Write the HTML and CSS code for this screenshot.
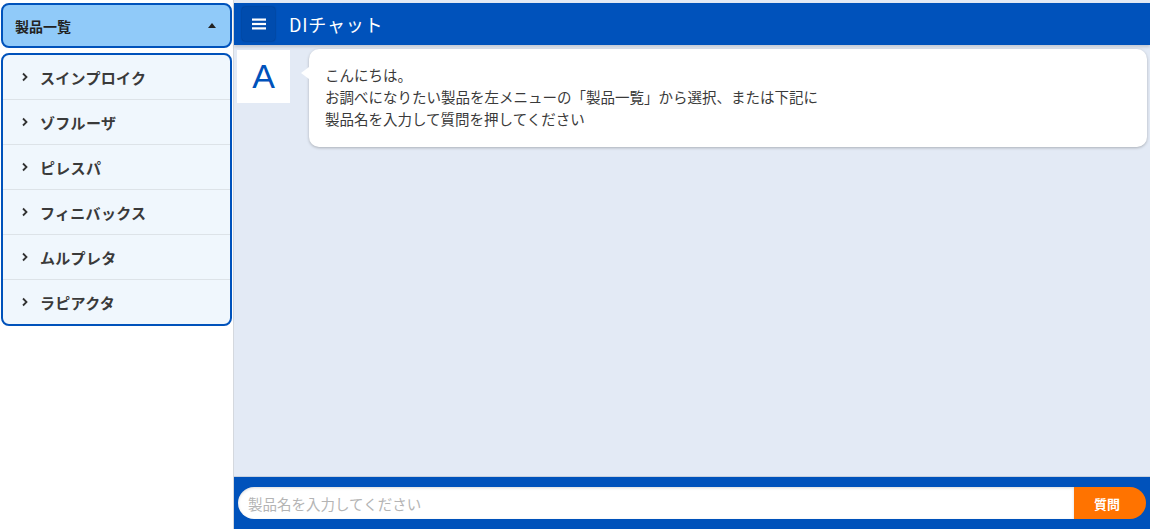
FILE: index.html
```html
<!DOCTYPE html>
<html lang="ja">
<head>
    <meta charset="UTF-8">
    <meta name="viewport" content="width=device-width, initial-scale=1.0">
    <title>DIチャット</title>
    <link rel="stylesheet" href="styles.css">
</head>
<body>
    <div class="layout">
        <aside class="sidebar">
            <div class="product-toggle">
                <span>製品一覧</span>
                <span class="caret"></span>
            </div>
            <ul class="product-list">
                <li><svg class="chev" width="8" height="10" viewBox="0 0 8 10"><path d="M2 1.5 L5.5 5 L2 8.5" fill="none" stroke="#333" stroke-width="1.8"/></svg>スインプロイク</li>
                <li><svg class="chev" width="8" height="10" viewBox="0 0 8 10"><path d="M2 1.5 L5.5 5 L2 8.5" fill="none" stroke="#333" stroke-width="1.8"/></svg>ゾフルーザ</li>
                <li><svg class="chev" width="8" height="10" viewBox="0 0 8 10"><path d="M2 1.5 L5.5 5 L2 8.5" fill="none" stroke="#333" stroke-width="1.8"/></svg>ピレスパ</li>
                <li><svg class="chev" width="8" height="10" viewBox="0 0 8 10"><path d="M2 1.5 L5.5 5 L2 8.5" fill="none" stroke="#333" stroke-width="1.8"/></svg>フィニバックス</li>
                <li><svg class="chev" width="8" height="10" viewBox="0 0 8 10"><path d="M2 1.5 L5.5 5 L2 8.5" fill="none" stroke="#333" stroke-width="1.8"/></svg>ムルプレタ</li>
                <li><svg class="chev" width="8" height="10" viewBox="0 0 8 10"><path d="M2 1.5 L5.5 5 L2 8.5" fill="none" stroke="#333" stroke-width="1.8"/></svg>ラピアクタ</li>
            </ul>
        </aside>
        <main class="chat">
            <header class="chat-header">
                <button class="menu-btn">
                    <svg width="16" height="14" viewBox="0 0 16 14"><rect x="1" y="1.5" width="14" height="2.2" fill="#fff"/><rect x="1" y="5.9" width="14" height="2.2" fill="#fff"/><rect x="1" y="10.3" width="14" height="2.2" fill="#fff"/></svg>
                </button>
                <h1 class="title">DIチャット</h1>
            </header>
            <div class="messages">
                <div class="msg">
                    <div class="avatar">A</div>
                    <div class="bubble">
                        こんにちは。<br>
                        お調べになりたい製品を左メニューの「製品一覧」から選択、または下記に<br>
                        製品名を入力して質問を押してください
                    </div>
                </div>
            </div>
            <footer class="chat-footer">
                <input class="query" type="text" placeholder="製品名を入力してください">
                <button class="ask">質問</button>
            </footer>
        </main>
    </div>
</body>
</html>
```

FILE: styles.css
```css
/* 全体 */
body {
    margin: 0;
    font-family: "Noto Sans CJK JP", "Noto Sans", sans-serif;
    color: #333;
    background: #fff;
}
.layout {
    display: flex;
    height: 529px;
}

/* 左メニュー */
.sidebar {
    width: 233px;
    flex-shrink: 0;
    padding-top: 3px;
}
.product-toggle {
    margin-left: 1px;
    width: 231px;
    height: 45px;
    box-sizing: border-box;
    background-color: #90caf9;
    border: 2px solid #0052bb;
    border-radius: 8px;
    display: flex;
    align-items: center;
    justify-content: space-between;
    padding: 0 14px 0 12px;
    font-size: 14px;
    font-weight: bold;
    color: #222;
}
.caret {
    width: 0;
    height: 0;
    border-left: 4px solid transparent;
    border-right: 4px solid transparent;
    border-bottom: 5px solid #222;
}
.product-list {
    list-style: none;
    margin: 5px 0 0 1px;
    padding: 0;
    width: 231px;
    box-sizing: border-box;
    background-color: #f0f7fd;
    border: 2px solid #0052bb;
    border-radius: 8px;
    overflow: hidden;
}
.product-list li {
    height: 45px;
    display: flex;
    align-items: center;
    padding-left: 18px;
    font-size: 15px;
    font-weight: bold;
    color: #3a3a3a;
    letter-spacing: 0.3px;
    border-top: 1px solid #dde3e8;
    box-sizing: border-box;
}
.product-list li:first-child {
    border-top: none;
    height: 44px;
}
.chev {
    margin-right: 11px;
}

/* チャット */
.chat {
    flex: 1;
    display: flex;
    flex-direction: column;
    background-color: #e3eaf5;
    border-left: 1px solid #d4d8de;
    padding-top: 3px;
}
.chat-header {
    height: 42px;
    background-color: #0052bb;
    display: flex;
    align-items: center;
    padding-left: 8px;
    box-shadow: 0 2px 3px rgba(0, 0, 0, 0.15);
}
.menu-btn {
    width: 33px;
    height: 34px;
    border: none;
    border-radius: 3px;
    background-color: #004cae;
    box-shadow: 0 0 2px rgba(0, 0, 0, 0.4);
    display: flex;
    align-items: center;
    justify-content: center;
    padding: 0;
}
.title {
    margin: 0 0 0 14px;
    font-size: 18px;
    font-weight: normal;
    color: #fff;
    letter-spacing: 0.8px;
}
.messages {
    flex: 1;
    padding: 5px 3px 0 3px;
}
.msg {
    display: flex;
    align-items: flex-start;
}
.avatar {
    width: 53px;
    height: 53px;
    background-color: #fff;
    color: #0052bb;
    font-size: 34px;
    display: flex;
    align-items: center;
    justify-content: center;
    font-family: "Liberation Sans", sans-serif;
}
.bubble {
    position: relative;
    flex: 1;
    margin-left: 19px;
    margin-top: -1px;
    background-color: #fff;
    border-radius: 10px;
    box-shadow: 0 1px 3px rgba(0, 0, 0, 0.25);
    padding: 15px 16px 17px 16px;
    font-size: 14.5px;
    line-height: 22px;
    color: #3a3a3a;
}
.bubble::before {
    content: "";
    position: absolute;
    left: -8px;
    top: 18px;
    border-top: 6px solid transparent;
    border-bottom: 6px solid transparent;
    border-right: 8px solid #fff;
}
.chat-footer {
    height: 53px;
    background-color: #0052bb;
    display: flex;
    align-items: center;
    padding: 0 4px 0 4px;
    box-sizing: border-box;
    border-top: 1px solid #c6d0df;
}
.query {
    flex: 1;
    height: 32px;
    box-sizing: border-box;
    border: none;
    border-radius: 16px 0 0 16px;
    padding: 0 10px;
    font-family: inherit;
    font-size: 14.5px;
    outline: none;
    box-shadow: inset 0 1px 3px rgba(0, 0, 0, 0.15);
}
.query::placeholder {
    color: #b4b4b4;
}
.ask {
    width: 72px;
    height: 32px;
    border: none;
    border-radius: 0 16px 16px 0;
    background-color: #ff7300;
    color: #fff;
    font-family: inherit;
    font-size: 13px;
    font-weight: bold;
    padding: 0 6px 0 0;
}
```
